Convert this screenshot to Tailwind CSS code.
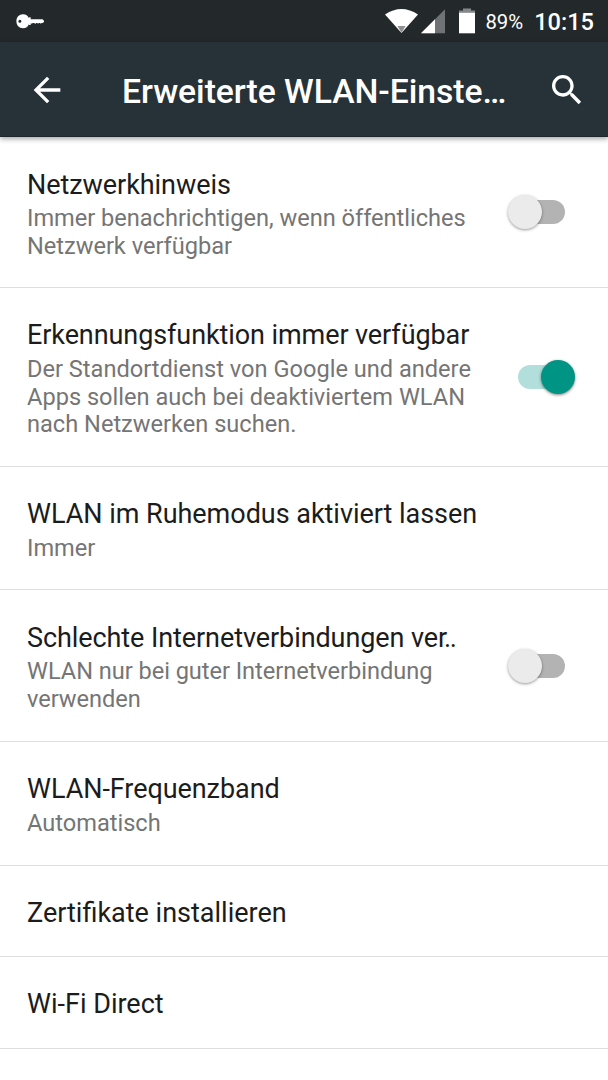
<!DOCTYPE html>
<html lang="de">
  <head>
    <meta charset="UTF-8" />
    <meta name="viewport" content="width=device-width, initial-scale=1.0" />
    <title>Erweiterte WLAN-Einstellungen</title>
    <script src="https://cdn.jsdelivr.net/npm/@tailwindcss/browser@4"></script>
  </head>

  <body class="flex flex-col w-full h-screen overflow-hidden bg-white font-['Roboto',sans-serif] text-[#1c1c1c]">
    <!-- ====== Status bar ====== -->
    <div class="flex items-center shrink-0 h-[42px] pl-4 pr-3.5 bg-[#23282b] text-white">
      <svg class="w-7 h-4" viewBox="0 0 28 16" fill="#fff">
        <path fill-rule="evenodd" d="M7 1.300C10 1.300 12 3 12.800 5L13.300 4.300H14.700V6.200H26.500L28 7.700V8.900L26.600 10H25.600L24.800 10.800L24 10H22.800L22 10.800L21.200 10H20L19.200 11L18.200 10H16.800L15.800 10.800L14.700 10.200V12H13.300L12.800 11.200C12 13.600 10 15.200 7 15.200C3 15.200 .4 12.200 .4 8.200S3 1.300 7 1.300ZM3.900 6.800A1.500 1.500 0 1 0 3.900 9.800A1.500 1.500 0 1 0 3.900 6.800Z" />
      </svg>
      <div class="flex items-center ml-auto">
        <svg class="w-[90px] h-[42px]" viewBox="385 0 90 42">
          <!-- wifi -->
          <path d="M385 14.500Q401.500 3.500 418 14.500L401.500 33Z" fill="#fff" />
          <path d="M397.500 26H405.500L401.500 33Z" fill="#8d8f90" />
          <!-- signal -->
          <path d="M421 33.200L445 9.200V33.200Z" fill="#707375" />
          <path d="M421 33.200L435 19.200V33.200Z" fill="#fff" />
          <!-- battery -->
          <path d="M459 13V10.500H463V8.500H471V10.500H475V13Z" fill="#85888a" />
          <path d="M459 12.800H475V33.300H459Z" fill="#fff" />
        </svg>
        <span class="ml-2.5 mt-[3px] text-[20.3px]">89%</span>
        <span class="ml-[11px] mt-[3px] text-[23.6px] font-medium">10:15</span>
      </div>
    </div>

    <!-- ====== App bar ====== -->
    <header class="relative flex items-center shrink-0 h-[95px] pl-[27px] pr-[21px] bg-[#273238] text-white border-b border-[#1d272c] shadow-[0_2px_5px_rgba(0,0,0,0.35)]">
      <button class="w-10 h-10 mt-px" aria-label="Zurück">
        <svg class="w-10 h-10" viewBox="0 0 24 24" fill="#fff">
          <path d="M20 11H7.830l5.590-5.590L12 4l-8 8 8 8 1.410-1.410L7.830 13H20v-2z" />
        </svg>
      </button>
      <h1 class="ml-[55px] mt-[5px] w-[390px] text-[33.700px] leading-10 font-medium tracking-[-0.04px] whitespace-nowrap">Erweiterte WLAN-Einste…</h1>
      <button class="ml-auto mt-px w-10 h-10" aria-label="Suchen">
        <svg class="w-10 h-10" viewBox="0 0 24 24" fill="#fff">
          <path d="M15.500 14h-.79l-.28-.27C15.410 12.590 16 11.110 16 9.500 16 5.910 13.090 3 9.500 3S3 5.910 3 9.500 5.910 16 9.500 16c1.610 0 3.090-.59 4.230-1.570l.27.28v.79l5 4.990L20.490 19l-4.990-5zm-6 0C7.010 14 5 11.990 5 9.500S7.010 5 9.500 5 14 7.010 14 9.500 11.990 14 9.500 14z" />
        </svg>
      </button>
    </header>

    <!-- ====== Settings list ====== -->
    <main class="flex flex-col">
      <section class="flex items-center h-[151px] pl-[27px] pr-[33px] border-b border-[#dedede]">
        <div class="flex-1 pt-[5px] whitespace-nowrap">
          <h2 class="text-[27px] leading-8 tracking-[-0.06px]">Netzwerkhinweis</h2>
          <p class="mt-1 text-[23.600px] leading-[27.600px] tracking-[-0.02px] text-[#757575]">Immer benachrichtigen, wenn öffentliches<br />Netzwerk verfügbar</p>
        </div>
        <div class="flex items-center w-[67px] h-[34px]">
          <div class="z-10 size-[34px] rounded-full bg-[#ebebeb] shadow-[0_1px_3px_rgba(0,0,0,0.4)]"></div>
          <div class="-ml-6 w-[47px] h-6 rounded-full bg-[#b3b3b3]"></div>
        </div>
      </section>

      <section class="flex items-center h-[179px] pl-[27px] pr-[33px] border-b border-[#dedede]">
        <div class="flex-1 pt-1 whitespace-nowrap">
          <h2 class="text-[27px] leading-8 tracking-[-0.09px]">Erkennungsfunktion immer verfügbar</h2>
          <p class="mt-[5px] text-[23.600px] leading-[27.600px] text-[#757575]">Der Standortdienst von Google und andere<br />Apps sollen auch bei deaktiviertem WLAN<br />nach Netzwerken suchen.</p>
        </div>
        <div class="flex items-center justify-end w-[67px] h-[34px]">
          <div class="-mr-6 w-[47px] h-6 rounded-full bg-[#b2dfdb]"></div>
          <div class="z-10 size-[34px] rounded-full bg-[#009485] shadow-[0_1px_3px_rgba(0,0,0,0.5)]"></div>
        </div>
      </section>

      <section class="flex items-center h-[123px] px-[27px] border-b border-[#dedede]">
        <div class="pt-1">
          <h2 class="text-[27px] leading-8 tracking-[-0.03px]">WLAN im Ruhemodus aktiviert lassen</h2>
          <p class="mt-[5px] text-[23.600px] leading-[27.600px] text-[#757575]">Immer</p>
        </div>
      </section>

      <section class="flex items-center h-[152px] pl-[27px] pr-[33px] border-b border-[#dedede]">
        <div class="flex-1 pt-[5px] whitespace-nowrap">
          <h2 class="text-[27px] leading-8 tracking-[-0.08px]">Schlechte Internetverbindungen ve<span class="tracking-[-1.5px]">r.</span>.</h2>
          <p class="mt-1 text-[23.600px] leading-[27.600px] tracking-[-0.04px] text-[#757575]">WLAN nur bei guter Internetverbindung<br />verwenden</p>
        </div>
        <div class="flex items-center w-[67px] h-[34px]">
          <div class="z-10 size-[34px] rounded-full bg-[#ebebeb] shadow-[0_1px_3px_rgba(0,0,0,0.4)]"></div>
          <div class="-ml-6 w-[47px] h-6 rounded-full bg-[#b3b3b3]"></div>
        </div>
      </section>

      <section class="flex items-center h-[124px] px-[27px] border-b border-[#dedede]">
        <div class="pt-1">
          <h2 class="text-[27px] leading-8 tracking-[-0.06px]">WLAN-Frequenzband</h2>
          <p class="mt-[5px] text-[23.600px] leading-[27.600px] text-[#757575]">Automatisch</p>
        </div>
      </section>

      <section class="flex items-center h-[91px] px-[27px] border-b border-[#dedede]">
        <h2 class="pt-[3px] text-[27px] leading-8">Zertifikate installieren</h2>
      </section>

      <section class="flex items-center h-[92px] px-[27px] border-b border-[#dedede]">
        <h2 class="pt-[3px] text-[27px] leading-8">Wi-Fi Direct</h2>
      </section>
    </main>
  </body>
</html>
